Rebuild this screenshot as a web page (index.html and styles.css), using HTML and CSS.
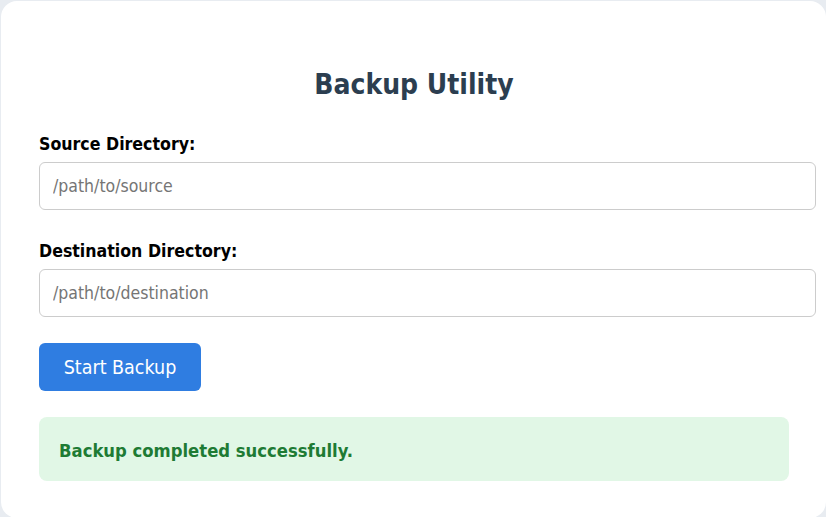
FILE: index.html
```html
<!DOCTYPE html>
<html lang="en">
<head>
<meta charset="utf-8">
<title>Backup Utility</title>
<link rel="stylesheet" href="styles.css">
</head>
<body>
<main class="card">
  <h1 class="title">Backup Utility</h1>
  <form class="form">
    <div class="field">
      <label class="label" for="src">Source Directory:</label>
      <input class="input" id="src" type="text" placeholder="/path/to/source">
    </div>
    <div class="field field-last">
      <label class="label" for="dst">Destination Directory:</label>
      <input class="input" id="dst" type="text" placeholder="/path/to/destination">
    </div>
    <div class="actions">
      <button class="btn" type="button">Start Backup</button>
    </div>
  </form>
  <div class="message">Backup completed successfully.</div>
</main>
</body>
</html>
```
FILE: styles.css
```css
html, body {
  margin: 0;
  padding: 0;
  overflow: hidden;
}
body {
  background: #e8ecf1;
  font-family: "DejaVu Sans Condensed", "DejaVu Sans", sans-serif;
  color: #000;
  height: 517px;
}
.card {
  box-sizing: border-box;
  margin: 1px 0 0 1px;
  width: 825px;
  height: 517px;
  background: #fff;
  border-radius: 16px;
  padding: 38px 37px 36px 38px;
}
.title {
  margin: 28px 0 30px;
  text-align: center;
  font-size: 28px;
  line-height: 36px;
  font-weight: bold;
  color: #2c3e50;
}
.form {
  display: flex;
  flex-direction: column;
}
.field {
  display: flex;
  flex-direction: column;
  margin-bottom: 30px;
}
.field-last {
  margin-bottom: 26px;
}
.label {
  font-size: 17.6px;
  line-height: 22px;
  font-weight: bold;
  margin-bottom: 7px;
}
.input {
  box-sizing: border-box;
  width: 777px;
  height: 48px;
  padding: 0 13px;
  border: 1px solid #ccc;
  border-radius: 6px;
  font-family: inherit;
  font-size: 17.5px;
  color: #333;
  background: #fff;
}
.input::placeholder {
  color: #757575;
}
.actions {
  display: flex;
}
.btn {
  width: 162px;
  height: 48px;
  border: 0;
  border-radius: 6px;
  background: #2f7de1;
  color: #fff;
  font-family: inherit;
  font-size: 19.5px;
  padding: 0;
}
.message {
  margin-top: 26px;
  height: 64px;
  box-sizing: border-box;
  display: flex;
  align-items: center;
  padding: 2px 20px 0;
  background: #e1f7e6;
  border-radius: 8px;
  color: #1e7b34;
  font-size: 18.3px;
  font-weight: bold;
}
```
